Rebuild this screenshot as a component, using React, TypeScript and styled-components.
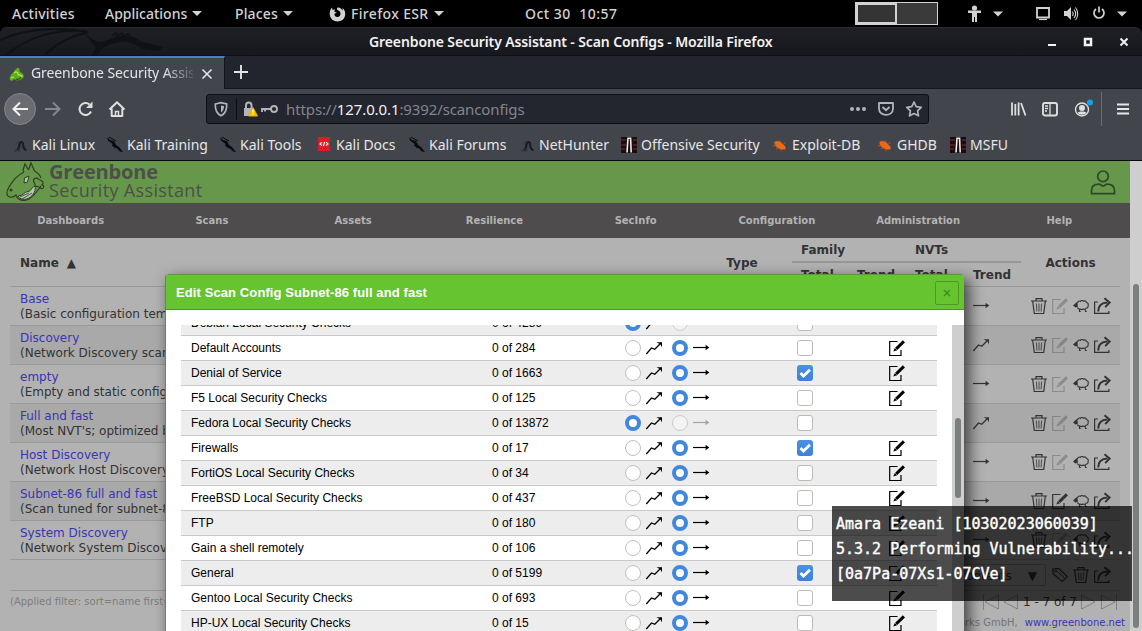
import React from "react";
import styled, { createGlobalStyle } from "styled-components";

const Global = createGlobalStyle`
  * { box-sizing: border-box; }
  html, body { margin: 0; padding: 0; overflow: hidden; }
  body { width: 1142px; height: 631px; background: #000; }
  svg { display: block; flex: none; overflow: visible; }
`;

const ui = `"Noto Sans", "Open Sans", sans-serif`;
const dejavu = `"DejaVu Sans", sans-serif`;

const Desktop = styled.div`
  position: relative;
  width: 1142px;
  height: 631px;
  overflow: hidden;
  display: flex;
  flex-direction: column;
  font-family: ${ui};
`;

/* ---------- desktop panel ---------- */

const Panel = styled.div`
  height: 27px;
  flex: none;
  display: flex;
  align-items: center;
  background: #000;
  color: #d2d2d0;
  font-size: 14px;
  font-weight: 500;
`;

const PanelItem = styled.div<{ $w: number; $ls?: number; $inset?: number }>`
  width: ${(p) => p.$w}px;
  padding-left: ${(p) => p.$inset ?? 0}px;
  flex: none;
  display: flex;
  align-items: center;
  gap: 5px;
  white-space: pre;
  letter-spacing: ${(p) => p.$ls ?? 0}px;
`;

const Caret = styled.i`
  border: 5px solid transparent;
  border-top-color: #d2d2d0;
  border-bottom: 0;
`;

const Workspaces = styled.div`
  width: 83px;
  height: 23px;
  display: flex;
  border: 1px solid #d2d2d0;
  background: #3a3a3a;
`;

const ActiveSpace = styled.div`
  width: 41px;
  border: 2px solid #d2d2d0;
  background: #343434;
`;

/* ---------- browser chrome ---------- */

const TitleBar = styled.div`
  height: 29px;
  flex: none;
  display: flex;
  align-items: center;
  background: linear-gradient(#1e2026, #17181d);
  border-top: 1px solid #2a2b2f;
  border-bottom: 1px solid #0f1014;
  border-radius: 7px 7px 0 0;
  color: #f2f2f2;
`;

const TitleArt = styled.div`
  width: 369px;
  height: 27px;
  overflow: hidden;
`;

const TitleText = styled.div`
  width: 678px;
  font-size: 14px;
  font-weight: 600;
  white-space: nowrap;
  letter-spacing: -0.11px;
`;

const WindowButtons = styled.div`
  display: flex;
  align-items: center;
  gap: 28px;
`;

const TabStrip = styled.div`
  height: 33px;
  flex: none;
  display: flex;
  background: #23252e;
  border-bottom: 1px solid #14151b;
`;

const Tab = styled.div`
  width: 225px;
  height: 33px;
  display: flex;
  align-items: center;
  background: #42454b;
  border-top: 2px solid #4a7cc9;
  border-right: 1px solid #14151b;
  padding-left: 9px;
`;

const TabTitle = styled.div`
  width: 162px;
  margin-left: 6px;
  margin-right: 9px;
  margin-top: -2px;
  overflow: hidden;
  white-space: nowrap;
  font-size: 14px;
  letter-spacing: -0.1px;
  color: #e4e4e6;
  -webkit-mask-image: linear-gradient(90deg, #000 82%, transparent 103%);
  mask-image: linear-gradient(90deg, #000 82%, transparent 103%);
`;

const NewTab = styled.div`
  padding: 9px 0 0 9px;
`;

const Toolbar = styled.div`
  height: 39px;
  flex: none;
  display: flex;
  align-items: center;
  background: #42454b;
  padding-left: 4px;
`;

const BackButton = styled.div`
  width: 32px;
  height: 32px;
  border-radius: 50%;
  background: #6b6c71;
  border: 1px solid #85868a;
  display: flex;
  align-items: center;
  justify-content: center;
`;

const NavIcons = styled.div`
  width: 170px;
  display: flex;
  gap: 16px;
  padding-left: 9px;
`;

const UrlBar = styled.div`
  width: 723px;
  height: 30px;
  display: flex;
  align-items: center;
  background: #23252f;
  border: 1px solid #0e0f14;
  border-radius: 3px;
  padding-left: 6px;
`;

const UrlDivider = styled.div`
  width: 1px;
  height: 22px;
  margin: 0 6px 0 7px;
  background: #0c0c11;
`;

const Url = styled.div`
  width: 571px;
  padding-left: 7px;
  font-size: 15px;
  letter-spacing: -0.11px;
  color: #84868c;
  white-space: nowrap;
  b { font-weight: 400; color: #f0f0f2; }
`;

const UrlActions = styled.div`
  display: flex;
  align-items: center;
  gap: 12px;
`;

const ToolIcons = styled.div`
  display: flex;
  align-items: center;
  gap: 16px;
  padding-left: 81px;
`;

const ToolDivider = styled.div`
  width: 1px;
  height: 34px;
  margin: 0 15px 0 11px;
  background: #6a6c71;
`;

const Bookmarks = styled.div`
  height: 33px;
  flex: none;
  display: flex;
  align-items: center;
  background: #42454b;
  border-bottom: 1px solid #08090b;
  padding: 1px 0 0 12px;
`;

const Bookmark = styled.div<{ $w: number }>`
  width: ${(p) => p.$w}px;
  flex: none;
  display: flex;
  align-items: center;
  gap: 4px;
  color: #e6e6e8;
  font-size: 14px;
  white-space: nowrap;
`;

/* ---------- web page ---------- */

const Viewport = styled.div`
  flex: 1;
  display: flex;
  min-height: 0;
  font-family: ${dejavu};
`;

const Page = styled.div`
  width: 1130px;
  background: #b2b2b2;
  color: #333;
  font-size: 12px;
`;

const PageScroll = styled.div`
  width: 12px;
  background: #cecece;
  padding: 123px 3px 3px;
`;

const Thumb = styled.div<{ $h: number }>`
  width: 6px;
  height: ${(p) => p.$h}px;
  border-radius: 3px;
  background: #7b7f7f;
`;

const Brand = styled.header`
  height: 42px;
  display: flex;
  align-items: center;
  background: #67974b;
  padding-left: 5px;
`;

const BrandName = styled.div`
  width: 1045px;
  padding: 1px 0 0 4px;
  height: 42px;
  font-family: "Open Sans", "Noto Sans", sans-serif;
  color: #4b5149;
  white-space: nowrap;
`;

const BrandTop = styled.div`
  font-size: 20px;
  line-height: 20px;
  font-weight: 700;
  letter-spacing: -0.15px;
`;

const BrandSub = styled.div`
  font-size: 18px;
  line-height: 17px;
  letter-spacing: 0.35px;
`;

const Menu = styled.nav`
  height: 35px;
  display: grid;
  grid-template-columns: repeat(8, 1fr);
  align-items: center;
  text-align: center;
  background: #4f4c4d;
  color: #b3b3b3;
  font-size: 10px;
  font-weight: 700;
`;

const Content = styled.main`
  padding: 0 10px;
`;

const HeadRow = styled.div`
  height: 49px;
  display: grid;
  grid-template-columns: 682px 100px 229px 99px;
  align-items: center;
  font-weight: 700;
  border-bottom: 1px solid #999;
`;

const HeadName = styled.div`
  padding: 2px 0 0 10px;
  display: flex;
  gap: 8px;
`;

const HeadCell = styled.div`
  padding-top: 2px;
  text-align: center;
`;

const HeadGroup = styled.div`
  display: flex;
  flex-direction: column;
  height: 48px;
`;

const GroupLine = styled.div<{ $cols: string; $rule?: boolean }>`
  display: grid;
  grid-template-columns: ${(p) => p.$cols};
  height: ${(p) => (p.$rule ? 25 : 23)}px;
  padding-left: 9px;
  line-height: ${(p) => (p.$rule ? 25 : 24)}px;
  border-bottom: ${(p) => (p.$rule ? "2px solid #979797" : "0")};
`;

const ConfigRow = styled.div<{ $shade: boolean }>`
  height: 39px;
  display: grid;
  grid-template-columns: 963px 48px 99px;
  align-items: center;
  background: ${(p) => (p.$shade ? "#a9a9a9" : "transparent")};
  border-bottom: 1px solid #999;
`;

const ConfigName = styled.div`
  padding: 2px 0 0 10px;
  line-height: 15px;
  white-space: nowrap;
`;

const Link = styled.a`
  color: #3935b4;
`;

const Actions = styled.div`
  display: flex;
  gap: 5px;
  padding-left: 10px;
`;

const BulkRow = styled.div`
  height: 31px;
  display: flex;
  align-items: center;
  justify-content: flex-end;
  gap: 5px;
  padding-right: 10px;
  border-bottom: 1px solid #999;
`;

const Select = styled.div`
  width: 190px;
  height: 22px;
  display: flex;
  align-items: center;
  justify-content: flex-end;
  gap: 16px;
  padding: 1px 8px 0 0;
  border: 1px solid #8b8b8b;
  border-radius: 2px;
  margin-right: 1px;
`;

const FilterRow = styled.div`
  height: 21px;
  display: flex;
  align-items: center;
  justify-content: space-between;
  font-size: 10px;
  color: #7d7d7d;
  white-space: nowrap;
`;

const Pager = styled.div`
  display: flex;
  align-items: center;
  gap: 4px;
  padding-right: 3px;
  font-size: 12px;
  color: #2e2e2e;
`;

const Copyright = styled.footer`
  height: 20px;
  display: flex;
  align-items: center;
  justify-content: flex-end;
  gap: 7px;
  margin-right: -5px;
  font-size: 10px;
  color: #747474;
`;

/* ---------- dialog ---------- */

const Dialog = styled.section`
  position: absolute;
  left: 165px;
  top: 274px;
  width: 799px;
  height: 380px;
  background: #fff;
  border-left: 1px solid #777;
  border-radius: 3px 3px 0 0;
  box-shadow: 5px 5px 15px rgba(0, 0, 0, 0.65);
  font-family: "Liberation Sans", Arial, sans-serif;
  font-size: 12px;
  color: #000;
`;

const DialogHead = styled.div`
  height: 36px;
  display: flex;
  align-items: center;
  justify-content: space-between;
  padding: 1px 5px 0 10px;
  background: #66c430;
  border-top: 1px solid #5a9a3a;
  border-bottom: 1px solid #519032;
  border-radius: 3px 3px 0 0;
  color: #fff;
  font-size: 13px;
  font-weight: 700;
  letter-spacing: 0.1px;
`;

const CloseButton = styled.div`
  width: 24px;
  height: 24px;
  display: flex;
  align-items: center;
  justify-content: center;
  border: 1px solid #4c9a24;
  border-radius: 2px;
`;

const DialogBody = styled.div`
  display: flex;
  justify-content: space-between;
  margin-top: 15px;
  padding-left: 15px;
  height: 330px;
`;

const Families = styled.div`
  width: 756px;
  height: 330px;
  overflow: hidden;
  display: flex;
  flex-direction: column;
`;

const DialogScroll = styled.div`
  width: 12px;
  background: #cecece;
  padding: 93px 3px 0;
`;

const Family = styled.div<{ $shade: boolean; $first: boolean }>`
  height: 25px;
  flex: none;
  margin-top: ${(p) => (p.$first ? -14 : 0)}px;
  display: grid;
  grid-template-columns: 301px 133px 172px 92px 58px;
  align-items: center;
  padding-left: 10px;
  background: ${(p) => (p.$shade ? "#ededed" : "#fff")};
  border-bottom: 1px solid #c6cace;
`;

const Trend = styled.div`
  display: flex;
  align-items: center;
  gap: 5px;
`;

const Radio = styled.span<{ $on: boolean; $dim?: boolean; $gap?: boolean }>`
  width: 16px;
  height: 16px;
  margin-left: ${(p) => (p.$gap ? 5 : 0)}px;
  border-radius: 50%;
  border: ${(p) => (p.$on ? "4px solid #4187dc" : "1px solid #c3bfbb")};
  background: ${(p) => (p.$dim ? "#f6f6f5" : "#fff")};
  opacity: ${(p) => (p.$dim ? 0.75 : 1)};
`;

const Check = styled.span<{ $on: boolean }>`
  width: 16px;
  height: 16px;
  border-radius: 3px;
  border: ${(p) => (p.$on ? "0" : "1px solid #bfbab6")};
  background: ${(p) => (p.$on ? "linear-gradient(#4a90e2, #3d82d8)" : "#fff")};
`;

/* ---------- on-screen caption ---------- */

const Caption = styled.div`
  position: absolute;
  left: 832px;
  top: 506px;
  width: 300px;
  height: 95px;
  padding: 6px 0 0 4px;
  background: rgba(0, 0, 0, 0.7);
  color: #fff;
  font-family: "DejaVu Sans Mono", monospace;
  font-size: 15px;
  line-height: 25px;
  white-space: pre;
  -webkit-text-stroke: 0.4px #fff;
`;

/* ---------- icons ---------- */

const Icon = ({ w = 16, h = 16, children }: { w?: number; h?: number; children: React.ReactNode }) => (
  <svg width={w} height={h} viewBox={`0 0 ${w} ${h}`} fill="none" stroke="currentColor">
    {children}
  </svg>
);

const TrashIcon = () => (
  <Icon>
    <path d="M0 3h16M5 3V.7h6V3M1.700 3.500l1.600 12h9.400l1.600-12" strokeWidth="1.200" />
    <path d="M5.400 5.500l.5 8M8 5.500v8M10.600 5.500l-.5 8" strokeWidth="1.100" opacity=".75" />
  </Icon>
);

const EditIcon = ({ off }: { off?: boolean }) => (
  <Icon>
    <g opacity={off ? 0.3 : 1}>
      <path d="M8.500 1.500H.7v14h11.300V10" strokeWidth="1.200" />
      <path d="M7.200 8.800L14.900 1.400" strokeWidth="3" />
      <path d="M4.300 11.600l1.500-3.700 2.400 2.400z" fill="currentColor" stroke="none" />
    </g>
  </Icon>
);

const SheepIcon = () => (
  <Icon>
    <path d="M4.500 5c.3-2 2-2.300 2.800-1.600.8-1.200 2.500-1.100 3.200-.2 1.300-.7 2.700 0 2.900 1.300 1.600.3 2.300 1.700 1.700 3 .3 1.500-.6 2.600-2 2.700-.8 1.200-2 1.400-3 .8-1 .8-2.200.7-3 0-1.500.2-2.400-.5-2.600-1.700" strokeWidth="1.100" />
    <path d="M0 7.500l3-2.700 1.500-1 .3 5-2.300.8z" fill="currentColor" stroke="none" />
    <path d="M6.500 11v2.500h1.200M12 11l.5 2.500h1.200" strokeWidth="1.100" />
  </Icon>
);

const ExportIcon = () => (
  <Icon>
    <path d="M4 4H.6v11.400h14.300v-2.400" strokeWidth="1.200" />
    <path d="M4.200 13.500C4.300 8 7 4.800 13.500 4.600" strokeWidth="2" />
    <path d="M10.500.3L15.600 4.500l-4.400 4.600" strokeWidth="2" />
  </Icon>
);

const UpIcon = () => (
  <Icon>
    <path d="M.3 14L5.500 8l3.300 1.300L15 3" strokeWidth="1.300" />
    <path d="M10.500 2.300h5.500v5.200l-1.500-3z" fill="currentColor" stroke="none" />
  </Icon>
);

const FlatIcon = ({ off }: { off?: boolean }) => (
  <Icon>
    <g opacity={off ? 0.3 : 1}>
      <path d="M0 7.500h14" strokeWidth="1.200" />
      <path d="M12.600 4.700L16.300 7.500l-3.700 2.800z" fill="currentColor" stroke="none" />
    </g>
  </Icon>
);

const TagIcon = () => (
  <Icon>
    <path d="M.7 2l6-.7 8.600 8.200-5 5L1.300 7z" strokeWidth="1.200" />
    <path d="M5.500 4.500l6.500 6" strokeWidth="1" />
    <circle cx="3.600" cy="4" r="1" />
  </Icon>
);

const KaliCoil = () => (
  <Icon>
    <path d="M5 12.800C8.500 12 6 5 9.500 5c3.200 0-.3 7 5 8.300" stroke="#1a1c22" strokeWidth="2.200" />
    <path d="M2.500 13.600h6" stroke="#2b3340" strokeWidth="1.600" />
    <path d="M4.500 6.500l3-2" stroke="#2f3542" />
  </Icon>
);

const KaliDragon = () => (
  <Icon>
    <path d="M0 0l3 3 4 1 2 4 3 2 4 5-3-.5-3-3-3-1-2-4-4-3z" fill="#08090a" stroke="none" />
    <path d="M2 0l7 4M5 9l3-2" stroke="#08090a" />
  </Icon>
);

const DocsIcon = () => (
  <Icon>
    <path d="M2 0h12v14H2z" fill="#e01b24" stroke="none" />
    <path d="M1.500 1v14H13" stroke="#4a3d70" strokeWidth="1.200" />
    <path d="M6 5.200L4 7l2 1.700M10 5.200L12 7l-2 1.700M8.600 5L7.400 9" stroke="#fff" strokeWidth="1.100" />
  </Icon>
);

const OffsecIcon = () => (
  <Icon>
    <path d="M0 0h16v16H0z" fill="#1b0d0e" stroke="none" />
    <path d="M0 3h5M0 8h5M0 12h4M12 3h4M12 8h4M12 12h4" stroke="#5a2424" strokeWidth="1.300" />
    <path d="M6 15.500L7 1.300h2.600l.6 14.200" stroke="#ececec" strokeWidth="1.600" />
  </Icon>
);

const BugIcon = () => (
  <Icon>
    <path d="M2.500 5C4.500 3.300 8 4.200 10.500 6.500s3.800 4.300 3 5.700c-2.500.8-5.500.4-7.800-1.400S2.300 7.200 2.500 5z" fill="#ec6a17" stroke="none" />
    <path d="M4 11l2 1M7 3.500l2 1.700M1 8.500L4 9M11.500 6l2 .3M8 12.500l1.500 1" stroke="#c2571b" />
  </Icon>
);

const FirefoxIcon = () => (
  <Icon w={17}>
    <path d="M8.500 1.500c-1 1.200-.5 2.500.8 2.900C12.700 5.200 12 11 8.500 11c-2.500 0-3.500-2-2.800-3.500l2.300-.8-2.500-1 .3-2.400L3.600 4 3 1.500C-1.500 6 .5 15.500 8.500 15.500c8.500 0 9.800-10 5-13.500l.3 2.500C12.500 2.500 10.500 1 8.500 1.500z" fill="#d2d2d0" stroke="none" />
  </Icon>
);

const FamiliarDragon = () => (
  <Icon>
    <path d="M1 14C0 11 2 8 5 6c1-3 4-5 5-4l1 4c3 1 5 4 3 6-3 3-7 3-9 1l-2 2z" fill="#5fae1c" stroke="none" />
    <path d="M5 7c2-2 4-1 4 1s4 0 4 3M2 12l3-1" stroke="#b6e35a" strokeWidth="1.300" />
    <path d="M7 13c2 1 4 0 5-2" stroke="#29570c" strokeWidth="1.200" />
  </Icon>
);

const TitleDragon = () => (
  <svg width="170" height="27" viewBox="0 0 170 27" fill="none" stroke="#101114">
    <path d="M0 12C25 1 55-2 88 4M6 27C30 8 55 1 86 3M45 27C55 17 70 8 86 5" strokeWidth="2" />
    <path d="M82 0c5 8 10 12 17 14 8 0 12-5 22-6 9-.5 15 1 21 6l21 5-4 4-17-2c-8-6-14-8-22-7-9 2-15 4-19 8l-5 8h-6l6-10C91 13 85 7 82 0z" fill="#101114" stroke="none" />
    <path d="M112 8l4-3 1 3 5-3 1 3 6-2 1 3" strokeWidth="1.500" />
  </svg>
);

const BrandLogo = () => (
  <svg width="40" height="42" viewBox="0 0 40 42" fill="none" stroke="#2c4123" strokeWidth="1.200">
    <path d="M19 11C13 14 8 19 4 26c-3 5-3 9 1 10 3 .7 5-1 6-2 2 6 8 6.500 13 4 6-4 9-9 12-13" />
    <path d="M19 11l-1-2 2-6 3.500 6M23.500 9L26 2l3.500 8c3 2 6 4 6.500 7" />
    <path d="M19.500 17l4.500-2-1.500 6-3.500 1z" fill="#b8c6b0" strokeWidth="1" />
    <path d="M13 35c5 0 6-4 10-4.500 4-.5 2-3 7-5.500 1 4-1 9-6 12-4 2-9 2-11-2z" fill="#b8c6b0" strokeWidth="1" />
    <path d="M30 25c1-3-2-3-1.500-6 .5-2 4-2.500 5-1s3 .500 3.500 2.500M37 20c2 1 1 3 0 4 3 0 1.500 4-.5 3.500M30 25l4 1 3 2" />
    <path d="M15 36l9-4M17 38l10-6" strokeWidth=".8" />
    <circle cx="6" cy="29" r=".9" fill="#2c4123" />
  </svg>
);

const UserIcon = () => (
  <svg width="26" height="26" viewBox="0 0 26 26" fill="none" stroke="#2c4a20" strokeWidth="1.700">
    <circle cx="13" cy="7.300" r="5.300" />
    <path d="M1.500 24.700v-3c0-4.500 3.200-6.500 7.500-6.500 1.500 0 2.800 1.800 4 1.800s2.500-1.800 4-1.800c4.300 0 7.500 2 7.500 6.500v3z" />
  </svg>
);

/* ---------- data ---------- */

const bookmarks: [string, number, () => React.ReactElement][] = [
  ["Kali Linux", 95, KaliCoil],
  ["Kali Training", 113, KaliDragon],
  ["Kali Tools", 96, KaliDragon],
  ["Kali Docs", 93, DocsIcon],
  ["Kali Forums", 110, KaliDragon],
  ["NetHunter", 102, KaliCoil],
  ["Offensive Security", 151, OffsecIcon],
  ["Exploit-DB", 105, BugIcon],
  ["GHDB", 73, BugIcon],
  ["MSFU", 70, OffsecIcon],
];

const menu = ["Dashboards", "Scans", "Assets", "Resilience", "SecInfo", "Configuration", "Administration", "Help"];

const configs = [
  { name: "Base", note: "(Basic configuration template)", up: false },
  { name: "Discovery", note: "(Network Discovery scan)", up: true },
  { name: "empty", note: "(Empty and static configuration)", up: false },
  { name: "Full and fast", note: "(Most NVT's; optimized by)", up: true },
  { name: "Host Discovery", note: "(Network Host Discovery)", up: false },
  { name: "Subnet-86 full and fast", note: "(Scan tuned for subnet-86)", up: false, editable: true },
  { name: "System Discovery", note: "(Network System Discovery)", up: false },
];

const families = [
  { name: "Debian Local Security Checks", nvts: 4289, grow: true, fixed: true },
  { name: "Default Accounts", nvts: 284 },
  { name: "Denial of Service", nvts: 1663, all: true },
  { name: "F5 Local Security Checks", nvts: 125 },
  { name: "Fedora Local Security Checks", nvts: 13872, grow: true, fixed: true },
  { name: "Firewalls", nvts: 17, all: true },
  { name: "FortiOS Local Security Checks", nvts: 34 },
  { name: "FreeBSD Local Security Checks", nvts: 437 },
  { name: "FTP", nvts: 180 },
  { name: "Gain a shell remotely", nvts: 106 },
  { name: "General", nvts: 5199, all: true },
  { name: "Gentoo Local Security Checks", nvts: 693 },
  { name: "HP-UX Local Security Checks", nvts: 15 },
];

/* ---------- sections ---------- */

const TopPanel = () => (
  <Panel>
    <PanelItem $w={105} $inset={12} $ls={0.25}>Activities</PanelItem>
    <PanelItem $w={130}>Applications<Caret /></PanelItem>
    <PanelItem $w={94} $ls={0.15}>Places<Caret /></PanelItem>
    <PanelItem $w={196} $ls={0.35}><FirefoxIcon />Firefox ESR<Caret /></PanelItem>
    <PanelItem $w={330} $ls={0.5}>Oct 30  10:57</PanelItem>
    <Workspaces><ActiveSpace /></Workspaces>
    <PanelItem $w={68}>
      <svg width="68" height="20" viewBox="0 0 68 20" fill="#d2d2d0">
        <circle cx="36.500" cy="4" r="2.600" />
        <path d="M30 6.500h13V9h-4v9h-2v-5h-1v5h-2V9h-4zM55 7.500h10l-5 5z" />
      </svg>
    </PanelItem>
    <svg width="110" height="20" viewBox="0 0 110 20" fill="none" stroke="#d2d2d0">
      <path d="M31 4h12v9.500H31z" strokeWidth="1.800" />
      <path d="M33 15.500h8" strokeWidth="1.200" />
      <path d="M58 7h3l4-4v13l-4-4h-3z" fill="#d2d2d0" stroke="none" />
      <path d="M66.500 7.500c1 1.500 1 3 0 4.500M68 5.500c2 2.500 2 6 0 8.500M69.500 3.500c3 3.500 3 9 0 12.500" strokeWidth="1.100" />
      <path d="M90 5a5 5 0 1 0 6 0M93 2.500v6" strokeWidth="1.700" />
      <path d="M111 7.500h10l-5 5z" fill="#d2d2d0" stroke="none" />
    </svg>
  </Panel>
);

const BrowserChrome = () => (
  <>
    <TitleBar>
      <TitleArt><TitleDragon /></TitleArt>
      <TitleText>Greenbone Security Assistant - Scan Configs - Mozilla Firefox</TitleText>
      <WindowButtons>
        <Icon w={9} h={8}><path d="M1 7h8" strokeWidth="2" /></Icon>
        <Icon w={8} h={8}><path d="M1 1h6v6H1z" strokeWidth="2.500" /></Icon>
        <Icon w={8} h={8}><path d="M.5.5l7 7m0-7l-7 7" strokeWidth="2" /></Icon>
      </WindowButtons>
    </TitleBar>
    <TabStrip>
      <Tab>
        <FamiliarDragon />
        <TabTitle>Greenbone Security Assistant</TabTitle>
        <Icon w={10} h={10}><path d="M.5.5l9 9m0-9l-9 9" stroke="#e4e4e6" strokeWidth="1.600" /></Icon>
      </Tab>
      <NewTab>
        <Icon w={14} h={14}><path d="M0 7h14M7 0v14" stroke="#e4e4e6" strokeWidth="1.900" /></Icon>
      </NewTab>
    </TabStrip>
    <Toolbar>
      <BackButton>
        <Icon><path d="M16 8H1.500M8 1.500L1.500 8 8 14.500" stroke="#f1f1f2" strokeWidth="2" /></Icon>
      </BackButton>
      <NavIcons>
        <Icon><path d="M0 8h14.500M8 1.500L14.500 8 8 14.500" stroke="#85878c" strokeWidth="2" /></Icon>
        <Icon>
          <path d="M14 10.500A6 6 0 1 1 12.500 3.500" stroke="#dededf" strokeWidth="2" />
          <path d="M15.500.5v6.500H9z" fill="#dededf" stroke="none" />
        </Icon>
        <Icon>
          <path d="M.5 8.500L8 1.200l7.500 7.300M2.700 7.500V15h10.600V7.500" stroke="#dededf" strokeWidth="2" strokeLinejoin="round" />
          <path d="M6.500 15v-4.500h3V15" stroke="#dededf" strokeWidth="1.500" />
        </Icon>
      </NavIcons>
      <UrlBar>
        <Icon>
          <path d="M2.300 3L8 1.700 13.700 3c.3 6-1.500 9.700-5.700 11.700C3.800 12.700 2 9 2.300 3z" stroke="#b3b4b7" strokeWidth="1.700" />
          <path d="M8 4.500l3 .6c0 3-.8 5-3 6.500z" fill="#b3b4b7" stroke="none" />
        </Icon>
        <UrlDivider />
        <Icon w={36}>
          <path d="M1 7h9v8H1z" fill="#b3b4b7" stroke="none" />
          <path d="M3 7V4.500c0-4 5.500-4 5.500 0V7" stroke="#b3b4b7" strokeWidth="2" />
          <path d="M10 6.500L14.500 15h-9z" fill="#ffbf00" stroke="#f0ae00" strokeLinejoin="round" />
          <path d="M10 8.500v3M10 12.500v1.200" stroke="#fff" strokeWidth="1.300" />
          <path d="M28 8h-9v3M22 8v2.500" stroke="#b3b4b7" strokeWidth="1.900" />
          <circle cx="31" cy="8" r="3" stroke="#b3b4b7" strokeWidth="1.900" />
        </Icon>
        <Url>https://<b>127.0.0.1</b>:9392/scanconfigs</Url>
        <UrlActions>
          <Icon>
            <g fill="#b3b4b7" stroke="none">
              <circle cx="2" cy="8" r="2" /><circle cx="8" cy="8" r="2" /><circle cx="14" cy="8" r="2" />
            </g>
          </Icon>
          <Icon>
            <path d="M1 2h14v5.500c0 8.500-14 8.500-14 0z" stroke="#b3b4b7" strokeWidth="1.800" strokeLinejoin="round" />
            <path d="M4.500 6L8 9.300 11.500 6" stroke="#b3b4b7" strokeWidth="1.900" />
          </Icon>
          <Icon>
            <path d="M8 1l2.200 4.600 5 .7-3.600 3.500.9 5L8 12.500l-4.500 2.300.9-5L.8 6.300l5-.7z" stroke="#b3b4b7" strokeWidth="1.700" strokeLinejoin="round" />
          </Icon>
        </UrlActions>
      </UrlBar>
      <ToolIcons>
        <Icon><path d="M2 1.500v13M5.300 3v11.500M8.600 1.500v13M11 2l4.500 12.500" stroke="#dededf" strokeWidth="1.800" /></Icon>
        <Icon>
          <rect x="1" y="2" width="14" height="12.500" rx="2" stroke="#dededf" strokeWidth="1.900" />
          <path d="M8 2v12M3 5h3M3 7.500h3M3 10h2" stroke="#dededf" strokeWidth="1.300" />
        </Icon>
        <Icon>
          <circle cx="8" cy="8.500" r="6.500" stroke="#dededf" strokeWidth="1.400" />
          <circle cx="8" cy="7" r="3" fill="#dededf" stroke="none" />
          <path d="M3.500 11.500c2-1.500 7-1.500 9 0-2 3-7 3-9 0z" fill="#dededf" stroke="none" />
          <circle cx="16" cy="1.500" r="3" fill="#0aa5ee" stroke="none" />
        </Icon>
      </ToolIcons>
      <ToolDivider />
      <Icon w={12}><path d="M0 3.500h12M0 8h12M0 12.500h12" stroke="#e6e6e7" strokeWidth="2" /></Icon>
    </Toolbar>
    <Bookmarks>
      {bookmarks.map(([label, width, Glyph]) => (
        <Bookmark key={label} $w={width}><Glyph />{label}</Bookmark>
      ))}
    </Bookmarks>
  </>
);

const ConfigList = () => (
  <Content>
    <HeadRow>
      <HeadName><span>Name</span><span>▲</span></HeadName>
      <HeadCell>Type</HeadCell>
      <HeadGroup>
        <GroupLine $cols="114px 1fr" $rule><span>Family</span><span>NVTs</span></GroupLine>
        <GroupLine $cols="56px 58px 58px 1fr">
          <span>Total</span><span>Trend</span><span>Total</span><span>Trend</span>
        </GroupLine>
      </HeadGroup>
      <HeadCell>Actions</HeadCell>
    </HeadRow>
    {configs.map((c, i) => (
      <ConfigRow key={c.name} $shade={i % 2 === 1}>
        <ConfigName><Link>{c.name}</Link><br />{c.note}</ConfigName>
        {c.up ? <UpIcon /> : <FlatIcon />}
        <Actions><TrashIcon /><EditIcon off={!c.editable} /><SheepIcon /><ExportIcon /></Actions>
      </ConfigRow>
    ))}
    <BulkRow>
      <Select><span>Apply to page contents</span><span>▼</span></Select>
      <TagIcon /><TrashIcon /><ExportIcon />
    </BulkRow>
    <FilterRow>
      <span>(Applied filter: sort=name first=1 rows=10)</span>
      <Pager>
        <Icon><g opacity=".35"><path d="M.5 0v16M15.500 1v14L2 8z" /></g></Icon>
        <Icon><g opacity=".35"><path d="M14.500 1v14L1 8z" /></g></Icon>
        <span>1 - 7 of 7</span>
        <Icon><g opacity=".35"><path d="M.5 1v14L14 8z" /></g></Icon>
        <Icon><g opacity=".35"><path d="M.5 1v14L14 8zM15.500 0v16" /></g></Icon>
      </Pager>
    </FilterRow>
    <Copyright><span>Greenbone Networks GmbH,</span><Link>www.greenbone.net</Link></Copyright>
  </Content>
);

const EditDialog = () => (
  <Dialog>
    <DialogHead>
      <span>Edit Scan Config Subnet-86 full and fast</span>
      <CloseButton>
        <Icon w={8} h={8}><path d="M1 1l6 6m0-6L1 7" stroke="#3f8a1c" strokeWidth="1.400" /></Icon>
      </CloseButton>
    </DialogHead>
    <DialogBody>
      <Families>
        {families.map((f, i) => (
          <Family key={f.name} $shade={i % 2 === 0} $first={i === 0}>
            <span>{f.name}</span>
            <span>0 of {f.nvts}</span>
            <Trend>
              <Radio $on={!!f.grow} />
              <UpIcon />
              <Radio $on={!f.grow} $dim={!!f.fixed} $gap />
              <FlatIcon off={!!f.fixed} />
            </Trend>
            <Check $on={!!f.all}>
              {f.all && <Icon><path d="M3.500 8l3 3L13 4.800" stroke="#fff" strokeWidth="2.800" /></Icon>}
            </Check>
            {!f.fixed && <EditIcon />}
          </Family>
        ))}
      </Families>
      <DialogScroll><Thumb $h={80} /></DialogScroll>
    </DialogBody>
  </Dialog>
);

export default function App() {
  return (
    <Desktop>
      <Global />
      <TopPanel />
      <BrowserChrome />
      <Viewport>
        <Page>
          <Brand>
            <BrandLogo />
            <BrandName>
              <BrandTop>Greenbone</BrandTop>
              <BrandSub>Security Assistant</BrandSub>
            </BrandName>
            <UserIcon />
          </Brand>
          <Menu>{menu.map((m) => <span key={m}>{m}</span>)}</Menu>
          <ConfigList />
        </Page>
        <PageScroll><Thumb $h={344} /></PageScroll>
      </Viewport>
      <EditDialog />
      <Caption>{"Amara Ezeani [10302023060039]\n5.3.2 Performing Vulnerability...\n[0a7Pa-07Xs1-07CVe]"}</Caption>
    </Desktop>
  );
}
